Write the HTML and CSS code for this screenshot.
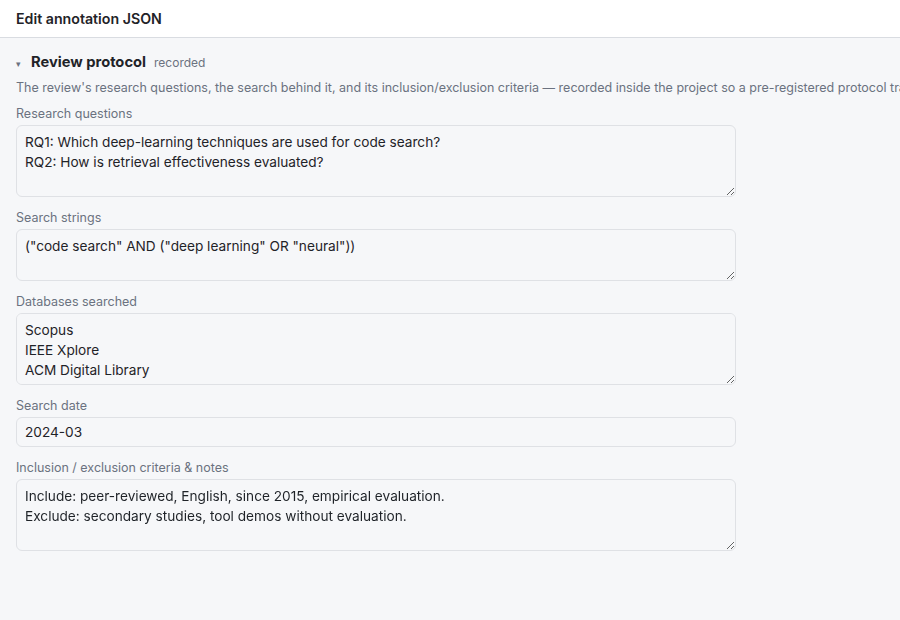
FILE: index.html
```html
<!DOCTYPE html>
<html lang="en">
<head>
  <meta charset="UTF-8">
  <meta name="viewport" content="width=device-width, initial-scale=1.0">
  <title>Edit annotation JSON</title>
  <link rel="stylesheet" href="styles.css">
</head>
<body>

<div class="header">Edit annotation JSON</div>

<div class="panel">
  <div class="section-title">
    <span class="caret">▾</span>
    <span class="title">Review protocol</span>
    <span class="status">recorded</span>
  </div>
  <p class="desc">The review's research questions, the search behind it, and its inclusion/exclusion criteria — recorded inside the project so a pre-registered protocol travels with the annotations.</p>

  <!-- 协议字段 -->
  <div class="field">
    <label for="rq">Research questions</label>
    <textarea id="rq" rows="3">RQ1: Which deep-learning techniques are used for code search?
RQ2: How is retrieval effectiveness evaluated?</textarea>
  </div>

  <div class="field">
    <label for="search">Search strings</label>
    <textarea id="search" class="short" rows="2">("code search" AND ("deep learning" OR "neural"))</textarea>
  </div>

  <div class="field">
    <label for="db">Databases searched</label>
    <textarea id="db" rows="3">Scopus
IEEE Xplore
ACM Digital Library</textarea>
  </div>

  <div class="field">
    <label for="date">Search date</label>
    <input type="text" id="date" value="2024-03">
  </div>

  <div class="field">
    <label for="notes">Inclusion / exclusion criteria &amp; notes</label>
    <textarea id="notes" rows="3">Include: peer-reviewed, English, since 2015, empirical evaluation.
Exclude: secondary studies, tool demos without evaluation.</textarea>
  </div>
</div>

</body>
</html>
```

FILE: styles.css
```css
body {
  font-family: Inter, "Liberation Sans", sans-serif;
  margin: 0;
  background-color: #f6f7f9;
  color: #1f2328;
  overflow: hidden;
}

.header {
  height: 37px;
  line-height: 37px;
  padding: 0 16px;
  font-size: 14.2px;
  font-weight: 600;
  background-color: #fff;
  border-bottom: 1px solid #d9dce1;
}

.panel {
  padding: 15px 16px 0;
}

.section-title {
  display: flex;
  align-items: baseline;
  height: 20px;
}

.caret {
  font-size: 9px;
  color: #6b7280;
  width: 15px;
}

.title {
  font-size: 14.7px;
  font-weight: 700;
  margin-right: 8px;
}

.status {
  font-size: 12px;
  color: #6b7280;
}

.desc {
  margin: 6px 0 8px;
  font-size: 12.5px;
  color: #6b7280;
  white-space: nowrap;
  line-height: 18px;
}

.field {
  margin-bottom: 12px;
}

.field label {
  display: block;
  font-size: 12.5px;
  line-height: 16px;
  padding-top: 1px;
  color: #6b7280;
  margin-bottom: 3px;
}

textarea,
input[type="text"] {
  display: block;
  box-sizing: border-box;
  width: 720px;
  font-family: Inter, "Liberation Sans", sans-serif;
  font-size: 13.65px;
  line-height: 20px;
  color: #1f2328;
  background-color: #f6f7f9;
  border: 1px solid #dfe1e5;
  border-radius: 6px;
  padding: 6px 8px;
  margin: 0;
}

textarea {
  height: 72px;
  resize: vertical;
}

textarea.short {
  height: 52px;
}

input[type="text"] {
  height: 30px;
  padding: 4px 8px;
}
```
